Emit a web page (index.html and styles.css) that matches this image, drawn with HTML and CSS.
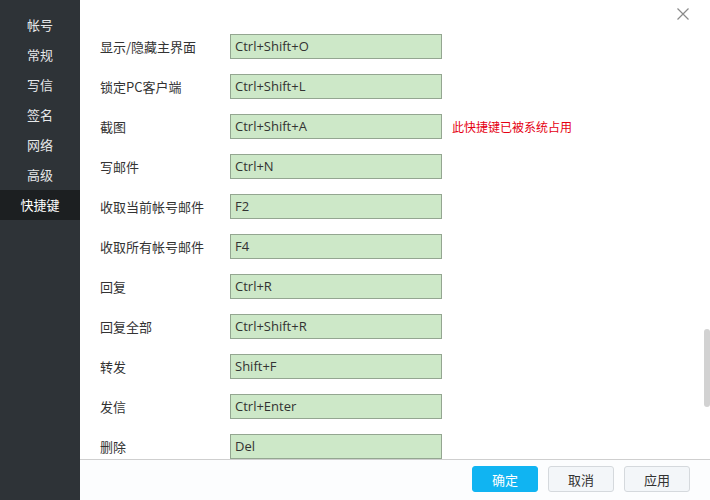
FILE: index.html
```html
<!DOCTYPE html>
<html lang="zh-CN">
<head>
    <meta charset="UTF-8">
    <title>设置 - 快捷键</title>
    <link rel="stylesheet" href="styles.css">
</head>
<body>
    <div class="window">
        <div class="sidebar">
            <div class="nav-item">帐号</div>
            <div class="nav-item">常规</div>
            <div class="nav-item">写信</div>
            <div class="nav-item">签名</div>
            <div class="nav-item">网络</div>
            <div class="nav-item">高级</div>
            <div class="nav-item active">快捷键</div>
        </div>
        <div class="main">
            <div class="content">
                <div class="row"><span class="label">显示/隐藏主界面</span><input class="key" value="Ctrl+Shift+O"></div>
                <div class="row"><span class="label">锁定PC客户端</span><input class="key" value="Ctrl+Shift+L"></div>
                <div class="row"><span class="label">截图</span><input class="key" value="Ctrl+Shift+A"><span class="warn">此快捷键已被系统占用</span></div>
                <div class="row"><span class="label">写邮件</span><input class="key" value="Ctrl+N"></div>
                <div class="row"><span class="label">收取当前帐号邮件</span><input class="key" value="F2"></div>
                <div class="row"><span class="label">收取所有帐号邮件</span><input class="key" value="F4"></div>
                <div class="row"><span class="label">回复</span><input class="key" value="Ctrl+R"></div>
                <div class="row"><span class="label">回复全部</span><input class="key" value="Ctrl+Shift+R"></div>
                <div class="row"><span class="label">转发</span><input class="key" value="Shift+F"></div>
                <div class="row"><span class="label">发信</span><input class="key" value="Ctrl+Enter"></div>
                <div class="row"><span class="label">删除</span><input class="key" value="Del"></div>
                <div class="scroll-thumb"></div>
            </div>
            <div class="footer">
                <button class="btn primary">确定</button>
                <button class="btn">取消</button>
                <button class="btn">应用</button>
            </div>
            <!-- close button sits over the top-right corner -->
            <div class="close">
                <svg width="12" height="12" viewBox="0 0 12 12">
                    <path d="M0.5 0.5 L11.5 11.5 M11.5 0.5 L0.5 11.5" stroke="#8a8a8a" stroke-width="1.2" fill="none"/>
                </svg>
            </div>
        </div>
    </div>
</body>
</html>
```

FILE: styles.css
```css
body {
    margin: 0;
    font-family: "Noto Sans CJK SC", "Noto Sans", sans-serif;
    font-size: 13px;
    color: #333;
}

.window {
    display: flex;
    width: 710px;
    height: 500px;
    overflow: hidden;
}

.sidebar {
    width: 80px;
    flex-shrink: 0;
    background-color: #2e3337;
    padding-top: 10px;
    box-sizing: border-box;
}

.nav-item {
    height: 30px;
    line-height: 30px;
    text-align: center;
    color: #e6e8ea;
    font-size: 13px;
}

.nav-item.active {
    background-color: #1c1f21;
    color: #fff;
}

.main {
    position: relative;
    flex: 1;
    display: flex;
    flex-direction: column;
    background-color: #fff;
}

.content {
    position: relative;
    height: 459px;
    overflow: hidden;
    padding: 26px 0 0 20px;
    box-sizing: border-box;
}

.row {
    display: flex;
    align-items: center;
    height: 40px;
}

.label {
    width: 130px;
    flex-shrink: 0;
    line-height: 1;
}

.key {
    width: 212px;
    height: 25px;
    box-sizing: border-box;
    margin: 0;
    padding: 0 0 0 4px;
    border: 1px solid #94a691;
    background-color: #cde8c8;
    color: #333;
    font-family: "Open Sans", "Noto Sans", sans-serif;
    font-size: 13px;
    outline: none;
}

.warn {
    margin-left: 10px;
    color: #e50012;
    font-size: 12px;
}

.scroll-thumb {
    position: absolute;
    right: 0;
    top: 329px;
    width: 6px;
    height: 78px;
    border-radius: 3px;
    background-color: #d2d2d2;
}

.footer {
    height: 41px;
    box-sizing: border-box;
    border-top: 1px solid #cfcfcf;
    background-color: #fcfdfe;
    display: flex;
    justify-content: flex-end;
    gap: 10px;
    padding: 6px 20px 0 0;
}

.btn {
    width: 66px;
    height: 26px;
    border: 1px solid #d5d9dd;
    border-radius: 3px;
    background-color: #f3f6f9;
    color: #333;
    font-family: "Noto Sans CJK SC", sans-serif;
    font-size: 13px;
    padding: 0;
    cursor: pointer;
}

.btn.primary {
    background-color: #10b4f2;
    border-color: #10b4f2;
    color: #fff;
}

.close {
    position: absolute;
    top: 8px;
    right: 21px;
    width: 12px;
    height: 12px;
    line-height: 0;
}
```
